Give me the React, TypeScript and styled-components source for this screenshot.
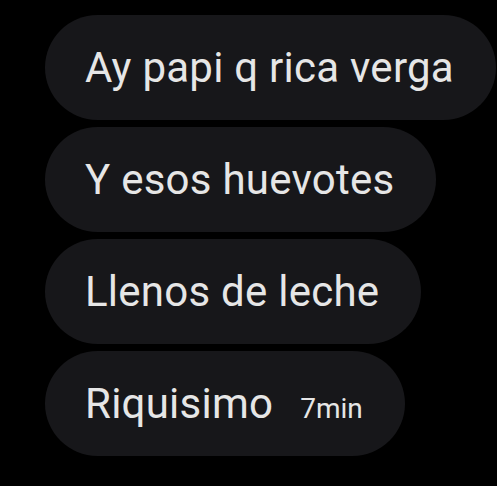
import React from "react";
import styled, { createGlobalStyle } from "styled-components";

const Global = createGlobalStyle`
  html, body { margin: 0; padding: 0; background: #000; }
  body { font-family: Roboto, "Noto Sans", sans-serif; }
`;

const Page = styled.div`
  width: 497px;
  height: 486px;
  background: #000;
  box-sizing: border-box;
  padding: 15px 0 0 45px;
  display: flex;
  flex-direction: column;
  align-items: flex-start;
  gap: 7px;
  overflow: hidden;
`;

const Bubble = styled.div`
  height: 105px;
  box-sizing: border-box;
  border-radius: 53px;
  background: #17171a;
  color: #e6e6e6;
  display: flex;
  align-items: center;
  padding: 0 42px 0 40px;
  font-size: 42px;
  letter-spacing: 0.25px;
  white-space: nowrap;
`;

const Time = styled.span`
  font-size: 28px;
  letter-spacing: 0;
  margin-left: 27px;
  margin-top: 10px;
  color: #e6e6e6;
`;

export default function App() {
  return (
    <>
      <Global />
      <Page>
        <Bubble>Ay papi q rica verga</Bubble>
        <Bubble>Y esos huevotes</Bubble>
        <Bubble>Llenos de leche</Bubble>
        <Bubble>
          Riquisimo<Time>7min</Time>
        </Bubble>
      </Page>
    </>
  );
}
